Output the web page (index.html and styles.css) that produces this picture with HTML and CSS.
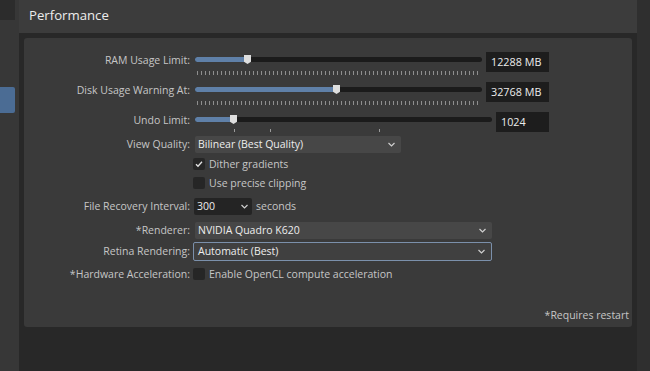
FILE: index.html
```html
<!DOCTYPE html>
<html>
<head>
  <meta charset="utf-8">
  <meta name="viewport" content="width=device-width">
  <title>Performance</title>
  <link rel="stylesheet" href="styles.css">
</head>
<body>
  <div class="window">
    <div class="sidebar">
      <div class="corner"></div>
      <div class="nav_item"></div>
    </div>

    <div class="main">
      <div class="header">Performance</div>
      <div class="content">
        <div class="panel">

          <div class="row slider_row">
            <div class="label">RAM Usage Limit:</div>
            <div class="slider">
              <div class="track">
                <div class="fill" style="width:52px"></div>
                <span class="thumb" style="left:49px"></span>
              </div>
              <div class="ticks"></div>
            </div>
            <div class="value">12288 MB</div>
          </div>

          <div class="row slider_row">
            <div class="label">Disk Usage Warning At:</div>
            <div class="slider">
              <div class="track">
                <div class="fill" style="width:141px"></div>
                <span class="thumb" style="left:138px"></span>
              </div>
              <div class="ticks"></div>
            </div>
            <div class="value">32768 MB</div>
          </div>

          <div class="row slider_row undo">
            <div class="label">Undo Limit:</div>
            <div class="slider">
              <div class="track">
                <div class="fill" style="width:38px"></div>
                <span class="thumb" style="left:35px"></span>
              </div>
              <div class="marks">
                <span class="mark" style="left:39px"></span>
                <span class="mark" style="left:75px"></span>
                <span class="mark" style="left:184px"></span>
              </div>
            </div>
            <div class="value">1024</div>
          </div>

          <div class="row view_row">
            <div class="label">View Quality:</div>
            <div class="select quality">
              <span>Bilinear (Best Quality)</span>
              <svg class="chevron" width="7" height="5" viewBox="0 0 7 5"><polyline points="0.5,1 3.5,4 6.5,1" fill="none" stroke="#cfcfcf" stroke-width="1.2"/></svg>
            </div>
          </div>

          <div class="row check_row dither">
            <div class="label"></div>
            <div class="check on">
              <svg width="12" height="12" viewBox="0 0 12 12"><polyline points="3,6.2 5,8.3 9,3.8" fill="none" stroke="#e4e4e4" stroke-width="1.3"/></svg>
            </div>
            <div class="check_text">Dither gradients</div>
          </div>

          <div class="row check_row clipping">
            <div class="label"></div>
            <div class="check"></div>
            <div class="check_text">Use precise clipping</div>
          </div>

          <div class="row file_row">
            <div class="label">File Recovery Interval:</div>
            <div class="select interval">
              <span>300</span>
              <svg class="chevron" width="7" height="5" viewBox="0 0 7 5"><polyline points="0.5,1 3.5,4 6.5,1" fill="none" stroke="#cfcfcf" stroke-width="1.2"/></svg>
            </div>
            <div class="unit">seconds</div>
          </div>

          <div class="row renderer_row">
            <div class="label">*Renderer:</div>
            <div class="select wide">
              <span>NVIDIA Quadro K620</span>
              <svg class="chevron" width="7" height="5" viewBox="0 0 7 5"><polyline points="0.5,1 3.5,4 6.5,1" fill="none" stroke="#cfcfcf" stroke-width="1.2"/></svg>
            </div>
          </div>

          <div class="row retina_row">
            <div class="label">Retina Rendering:</div>
            <div class="select wide focused">
              <span>Automatic (Best)</span>
              <svg class="chevron" width="7" height="5" viewBox="0 0 7 5"><polyline points="0.5,1 3.5,4 6.5,1" fill="none" stroke="#cfcfcf" stroke-width="1.2"/></svg>
            </div>
          </div>

          <div class="row check_row hardware">
            <div class="label">*Hardware Acceleration:</div>
            <div class="check"></div>
            <div class="check_text">Enable OpenCL compute acceleration</div>
          </div>

          <div class="footnote">*Requires restart</div>
        </div>
      </div>
    </div>

    <div class="rightbar"></div>
  </div>
</body>
</html>
```

FILE: styles.css
```css
body{
    margin: 0;
    background-color: #2a2a2a;
    font-family: "Open Sans", "Noto Sans", sans-serif;
    font-size: 10.5px;
    color: #c6c6c6;
}

.window{
    width: 650px;
    height: 371px;
    display: flex;
    overflow: hidden;
}

/* left column */
.sidebar{
    width: 19px;
    background-color: #373737;
    display: flex;
    flex-direction: column;
}

.sidebar .corner{
    width: 15px;
    height: 20px;
    background-color: #2c2c2c;
}

.sidebar .nav_item{
    width: 15px;
    height: 26px;
    margin-top: 67px;
    background-color: #4b6c94;
    border-radius: 0 2px 2px 0;
}

.main{
    flex: 1;
    display: flex;
    flex-direction: column;
}

.header{
    height: 33px;
    line-height: 31px;
    padding-left: 10px;
    background-color: #3c3c3c;
    color: #ececec;
    font-size: 13.2px;
}

.content{
    flex: 1;
    padding: 5px 5px 0 5px;
    background-color: #282828;
}

.panel{
    height: 289px;
    box-sizing: border-box;
    padding-top: 14px;
    background-color: #3a3a3a;
    border-radius: 3px;
    display: flex;
    flex-direction: column;
}

.row{
    display: flex;
    align-items: flex-start;
}

.label{
    width: 166px;
    flex-shrink: 0;
    text-align: right;
    white-space: nowrap;
}

/* sliders */
.slider_row{
    height: 30px;
}

.slider_row .label{
    line-height: 16px;
}

.slider{
    position: relative;
    width: 287px;
    margin-left: 5px;
}

.undo{
    height: 24px;
}

.undo .slider{
    width: 297px;
}

.track{
    position: relative;
    height: 5px;
    margin-top: 5px;
    background-color: #1b1b1b;
    border-radius: 3px;
}

.fill{
    height: 5px;
    background-color: #5f80a8;
    border-radius: 3px 0 0 3px;
}

.thumb{
    position: absolute;
    top: -2px;
    width: 7px;
    height: 9px;
    background-color: #dedede;
    clip-path: polygon(0 0, 100% 0, 100% 75%, 50% 100%, 0 75%);
}

.ticks{
    height: 4px;
    width: 282px;
    margin: 9px 0 0 2px;
    background: repeating-linear-gradient(to right, #8e8e8e 0 1px, transparent 1px 4px);
}

.marks{
    position: relative;
    height: 3px;
    margin-top: 7px;
}

.mark{
    position: absolute;
    top: 0;
    width: 1px;
    height: 3px;
    background-color: #9a9a9a;
}

.value{
    width: 63px;
    height: 20px;
    line-height: 20px;
    box-sizing: border-box;
    padding-left: 5px;
    margin-left: 4px;
    background-color: #1d1d1d;
    color: #ececec;
    font-size: 10.8px;
}

.undo .value{
    width: 53px;
}

/* dropdowns */
.select{
    height: 17px;
    line-height: 17px;
    box-sizing: border-box;
    margin-left: 5px;
    padding: 0 6px 0 3px;
    background-color: #474747;
    border-radius: 2px;
    color: #ededed;
    display: flex;
    align-items: center;
    justify-content: space-between;
}

.view_row{
    height: 22px;
}

.view_row .label,
.file_row .label,
.renderer_row .label{
    line-height: 17px;
}

.quality{
    width: 206px;
}

.file_row{
    height: 24px;
}

.interval{
    width: 58px;
    margin-left: 4px;
    padding-right: 4px;
    background-color: #242424;
}

.unit{
    line-height: 17px;
    margin-left: 4px;
}

.renderer_row{
    height: 20px;
}

.wide{
    width: 297px;
}

.retina_row{
    height: 26px;
}

.retina_row .label{
    line-height: 19px;
}

.focused{
    width: 299px;
    height: 19px;
    margin-left: 3px;
    padding-left: 4px;
    border: 1px solid #7b90ab;
    background-color: #404040;
}

/* checkboxes */
.check_row .label{
    line-height: 12px;
}

.dither{
    height: 19px;
}

.clipping{
    height: 21px;
}

.hardware{
    height: 12px;
}

.check{
    width: 12px;
    height: 12px;
    margin-left: 3px;
    background-color: #262626;
    border-radius: 2px;
}

.check svg{
    display: block;
}

.check_text{
    line-height: 12px;
    margin-left: 4px;
}

.footnote{
    margin-top: auto;
    margin-bottom: 5px;
    padding-right: 3px;
    text-align: right;
    line-height: 13px;
}

.rightbar{
    width: 13px;
    background-color: #2f2f2f;
}
```
